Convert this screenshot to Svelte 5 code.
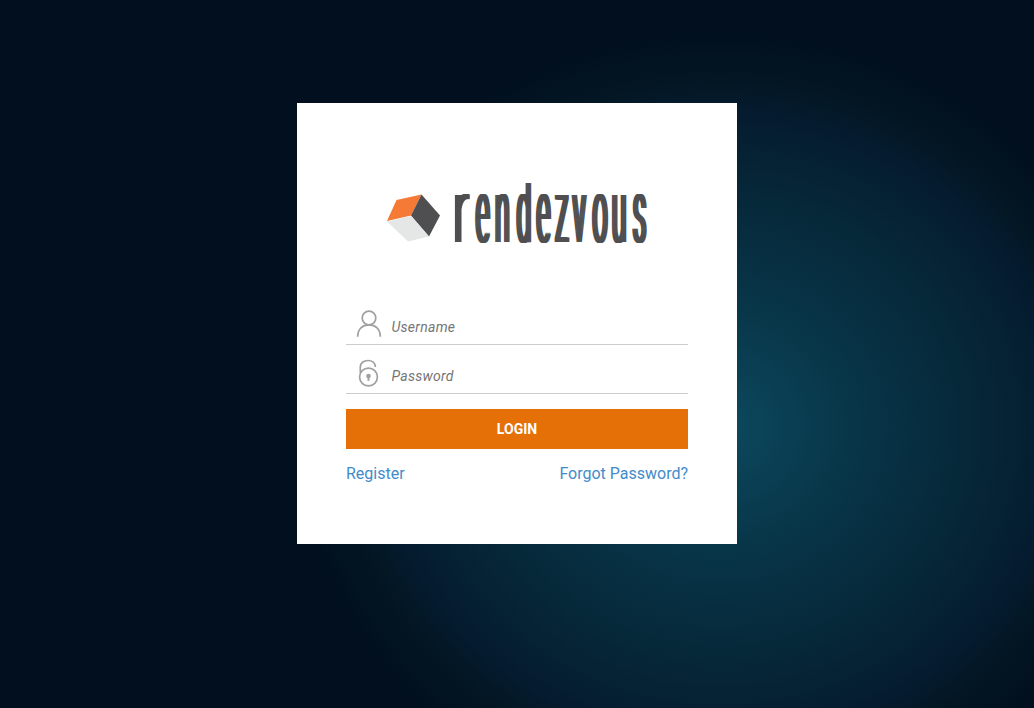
<script>
  const brand = 'rendezvous';
  const spread = [-2, -1, 1, 2];
</script>

<main>
  <section class="card">
    <div class="logo">
      <svg width="262" height="62" viewBox="386 182 262 62" role="img" aria-label={brand}>
        <defs>
          <clipPath id="cap"><rect x="440" y="183" width="215" height="60" /></clipPath>
        </defs>
        <polygon points="396.5,200 421.5,194.5 411,215.5 387,221" fill="#f47a36" />
        <polygon points="421.5,194.5 440,215.5 429,236.5 411,215.5" fill="#4f4f51" />
        <polygon points="387,221.5 411,216 429,236.5 408,241.5" fill="#e5e7e7" />
        <g clip-path="url(#cap)">
          <g class="brand" id="wordmark">
            <text transform="translate(453.6 241.8) scale(0.5 1)" x="0">{brand[0]}</text>
            <text transform="translate(454.2 241.8) scale(0.29 1)" x="75.2 141.5 216 284.5 349.5 410 477.5 544 616.5">{brand.slice(1)}</text>
          </g>
          {#each spread as dx}
            <use href="#wordmark" x={dx} />
          {/each}
        </g>
      </svg>
    </div>

    <form onsubmit={(e) => e.preventDefault()}>
      <label class="field">
        <svg width="26" height="28" viewBox="0 0 26 28">
          <circle cx="13" cy="8" r="6.8" />
          <path d="M1.7 26.8C1.7 19 6.5 14.9 13 14.9S24.3 19 24.3 26.8" />
        </svg>
        <input type="text" placeholder="Username" />
      </label>
      <label class="field">
        <svg width="26" height="28" viewBox="0 0 26 28">
          <circle cx="12.5" cy="18" r="8.9" />
          <path d="M4.3 13.4V7.8C4.3 4 7.8 1.5 12 1.5S19.2 4 19.4 8" />
          <circle class="hole" cx="12.5" cy="17" r="2.3" />
          <path d="M12.5 17v4.8" stroke-width="2" />
        </svg>
        <input type="password" placeholder="Password" />
      </label>
      <button type="submit">LOGIN</button>
      <nav>
        <a href="#register">Register</a>
        <a href="#forgot">Forgot Password?</a>
      </nav>
    </form>
  </section>
</main>

<style>
  :global(body) { margin: 0; background: #010f1e; }
  main {
    box-sizing: border-box;
    height: 708px;
    padding-top: 103px;
    overflow: hidden;
    font-family: Roboto, sans-serif;
    background: radial-gradient(ellipse 440px 408px at 720px 426px, #0c495e 0%, #083548 31%, #06293a 55%, #051c30 76%, #031623 85%, #010f1e 98%);
  }
  .card {
    box-sizing: border-box;
    width: 440px;
    height: 441px;
    margin: 0 auto;
    padding: 79px 49px 0;
    background: #fff;
  }
  .logo { display: flex; justify-content: center; height: 114px; }
  .logo svg { overflow: visible; }
  .brand { font-family: Roboto, sans-serif; font-weight: 300; font-size: 89px; fill: #4f4f51; }
  form { display: flex; flex-direction: column; }
  .field {
    box-sizing: border-box;
    display: flex;
    height: 49px;
    padding: 14px 0 0 10px;
    border-bottom: 1px solid #ccc;
  }
  .field svg { flex: none; fill: none; stroke: #a0a0a0; stroke-width: 1.7; }
  .field .hole { fill: #a0a0a0; stroke: none; }
  input {
    flex: 1;
    min-width: 0;
    height: 34px;
    padding: 0 0 0 9.5px;
    border: 0;
    outline: 0;
    background: none;
    font: 14px Roboto, sans-serif;
    letter-spacing: 0.28px;
  }
  input::placeholder { color: #757575; font-style: italic; opacity: 1; }
  button {
    height: 40px;
    margin-top: 15px;
    padding: 0;
    border: 0;
    color: #fff;
    background: #e57007;
    font: bold 14px Roboto, sans-serif;
  }
  nav { display: flex; justify-content: space-between; margin-top: 15px; line-height: 20px; }
  a { color: #428bca; font-size: 16px; text-decoration: none; }
</style>
